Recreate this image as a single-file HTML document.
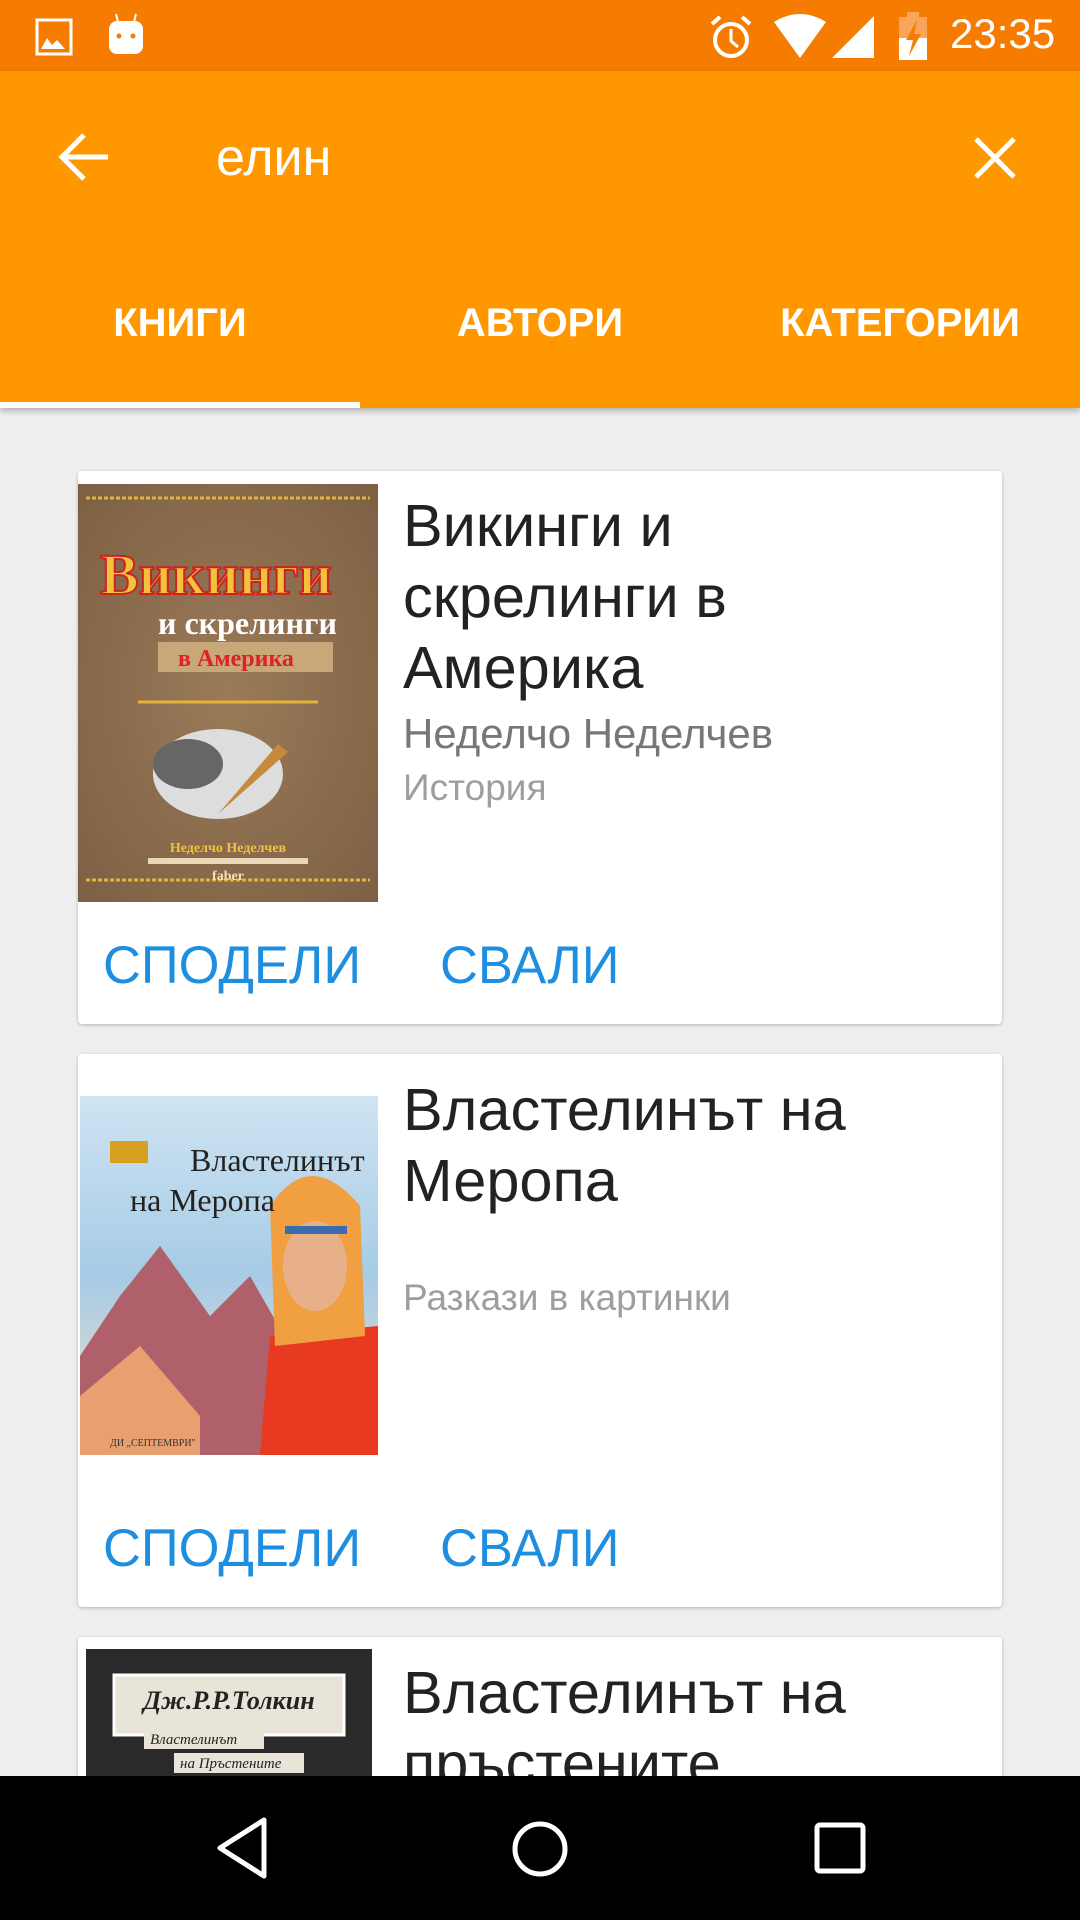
<!DOCTYPE html>
<html><head><meta charset="utf-8">
<style>
*{margin:0;padding:0;box-sizing:border-box}
body{width:1080px;height:1920px;overflow:hidden;background:#eeeeee;font-family:"Liberation Sans","Noto Sans CJK SC",sans-serif;position:relative}
.abs{position:absolute}
#status{left:0;top:0;width:1080px;height:71px;background:#f57c00}
#bar{left:0;top:71px;width:1080px;height:337px;background:#ff9800;box-shadow:0 3px 6px rgba(0,0,0,.25)}
.tab{top:300px;color:#fff;font-weight:bold;font-size:40px;width:360px;text-align:center}
.card{left:78px;width:924px;background:#fff;border-radius:4px;box-shadow:0 1px 3px rgba(0,0,0,.25)}
.title{left:403px;font-size:59.5px;line-height:71px;color:#222}
.auth{left:403px;font-size:42px;color:#777}
.cat{left:403px;font-size:37px;color:#9e9e9e}
.btn{font-size:52.5px;color:#1e8ee0}
#nav{left:0;top:1776px;width:1080px;height:144px;background:#000}
</style></head><body>
<div id="status" class="abs">
 <svg class="abs" style="left:35px;top:18px" width="38" height="38" viewBox="0 0 38 38"><rect x="2" y="2" width="34" height="34" fill="none" stroke="#fff" stroke-width="3"/><path d="M6 31 L12 20 L17 27 L22 22 L30 31 Z" fill="#fff"/></svg>
 <svg class="abs" style="left:106px;top:12px" width="40" height="44" viewBox="0 0 40 44"><path d="M10 2 L12 10 M30 2 L28 10" stroke="#fff" stroke-width="2"/><rect x="3" y="9" width="34" height="33" rx="8" fill="#fff"/><circle cx="13" cy="24" r="2.5" fill="#f57c00"/><circle cx="27" cy="24" r="2.5" fill="#f57c00"/></svg>
 <svg class="abs" style="left:709px;top:14px" width="44" height="46" viewBox="0 0 44 46"><circle cx="22" cy="26" r="16" fill="none" stroke="#fff" stroke-width="4"/><path d="M22 15 V27 L29 33" fill="none" stroke="#fff" stroke-width="3"/><path d="M3 10 L11 3 M41 10 L33 3" stroke="#fff" stroke-width="4"/></svg>
 <svg class="abs" style="left:772px;top:14px" width="56" height="44" viewBox="0 0 56 44"><path d="M2 8 Q28 -8 54 8 L28 44 Z" fill="#fff"/></svg>
 <svg class="abs" style="left:832px;top:14px" width="44" height="44" viewBox="0 0 44 44"><path d="M42 2 V44 H0 Z" fill="#fff"/></svg>
 <svg class="abs" style="left:898px;top:12px" width="30" height="48" viewBox="0 0 30 48"><rect x="9" y="0" width="12" height="5" fill="#f9a55a"/><rect x="1" y="5" width="28" height="43" fill="#f9a55a"/><rect x="1" y="26" width="28" height="22" fill="#fff"/><path d="M19 8 L8 28 H15 L11 44 L23 22 H16 Z" fill="#f57c00"/></svg>
 <div class="abs" style="left:950px;top:10px;color:#fff;font-size:42px">23:35</div>
</div>
<div id="bar" class="abs">
 <svg class="abs" style="left:58px;top:60px" width="52" height="52" viewBox="0 0 52 52"><path d="M50 26 H6 M26 4 L4 26 L26 48" fill="none" stroke="#fff" stroke-width="5"/></svg>
 <div class="abs" style="left:216px;top:57px;color:#fff;font-size:52px">елин</div>
 <svg class="abs" style="left:972px;top:64px" width="46" height="46" viewBox="0 0 46 46"><path d="M4 4 L42 42 M42 4 L4 42" stroke="#fff" stroke-width="5"/></svg>
 <div class="abs tab" style="left:0;top:230px">КНИГИ</div>
 <div class="abs tab" style="left:360px;top:230px">АВТОРИ</div>
 <div class="abs tab" style="left:720px;top:230px">КАТЕГОРИИ</div>
 <div class="abs" style="left:0;top:331px;width:360px;height:6px;background:#fff"></div>
</div>

<div class="abs card" style="top:471px;height:553px"></div>
<svg class="abs" style="left:78px;top:484px" width="300" height="418" viewBox="0 0 300 418">
 <defs><radialGradient id="g1" cx="50%" cy="50%" r="70%"><stop offset="0" stop-color="#9a7a58"/><stop offset="1" stop-color="#7d6044"/></radialGradient></defs>
 <rect width="300" height="418" fill="url(#g1)"/>
 <line x1="8" y1="14" x2="292" y2="14" stroke="#e3b33a" stroke-width="3" stroke-dasharray="4 2"/>
 <line x1="8" y1="396" x2="292" y2="396" stroke="#e3b33a" stroke-width="3" stroke-dasharray="4 2"/>
 <text x="22" y="110" font-family="Liberation Serif" font-weight="bold" font-size="58" fill="#f2c23c" stroke="#c22" stroke-width="2">Викинги</text>
 <text x="80" y="150" font-family="Liberation Serif" font-weight="bold" font-size="32" fill="#fff">и скрелинги</text>
 <rect x="80" y="158" width="175" height="30" fill="#c8a778"/>
 <text x="100" y="182" font-family="Liberation Serif" font-weight="bold" font-size="24" fill="#d22">в Америка</text>
 <line x1="60" y1="218" x2="240" y2="218" stroke="#e3b33a" stroke-width="3"/>
 <ellipse cx="140" cy="290" rx="65" ry="45" fill="#ddd"/>
 <ellipse cx="110" cy="280" rx="35" ry="25" fill="#666"/>
 <path d="M140 330 L200 260 L210 268 Z" fill="#c68b3a"/>
 <text x="150" y="368" text-anchor="middle" font-family="Liberation Serif" font-weight="bold" font-size="14" fill="#f2c23c">Неделчо Неделчев</text>
 <rect x="70" y="374" width="160" height="6" fill="#e8d8b8"/>
 <text x="150" y="396" text-anchor="middle" font-family="Liberation Serif" font-weight="bold" font-size="14" fill="#f2e2b0">faber</text>
</svg>
<div class="abs title" style="top:490px">Викинги и<br>скрелинги в<br>Америка</div>
<div class="abs auth" style="top:710px">Неделчо Неделчев</div>
<div class="abs cat" style="top:767px">История</div>
<div class="abs btn" style="left:103px;top:935px">СПОДЕЛИ</div>
<div class="abs btn" style="left:440px;top:935px">СВАЛИ</div>

<div class="abs card" style="top:1054px;height:553px"></div>
<svg class="abs" style="left:80px;top:1096px" width="298" height="359" viewBox="0 0 298 359">
 <defs><linearGradient id="g2" x1="0" y1="0" x2="0" y2="1"><stop offset="0" stop-color="#cfe4f2"/><stop offset=".5" stop-color="#a6cbe6"/><stop offset="1" stop-color="#f4e0c8"/></linearGradient></defs>
 <rect width="298" height="359" fill="url(#g2)"/>
 <path d="M0 260 L40 200 L80 150 L130 220 L170 180 L210 250 L210 359 L0 359 Z" fill="#b0606a"/>
 <path d="M0 300 L60 250 L120 320 L120 359 L0 359Z" fill="#e8a070"/>
 <path d="M180 359 L190 240 L298 230 L298 359 Z" fill="#e83a20"/>
 <path d="M190 110 Q230 50 280 110 L285 240 L195 250 Z" fill="#f0a040"/>
 <ellipse cx="235" cy="170" rx="32" ry="45" fill="#e8b088"/>
 <rect x="205" y="130" width="62" height="8" fill="#3a6ab0"/>
 <rect x="30" y="45" width="38" height="22" fill="#d7a020"/>
 <text x="110" y="75" font-family="Liberation Serif" font-size="32" fill="#222">Властелинът</text>
 <text x="50" y="115" font-family="Liberation Serif" font-size="32" fill="#222">на Меропа</text>
 <text x="30" y="350" font-family="Liberation Serif" font-size="10" fill="#333">ДИ „СЕПТЕМВРИ"</text>
</svg>
<div class="abs title" style="top:1074px">Властелинът на<br>Меропа</div>
<div class="abs cat" style="top:1277px">Разкази в картинки</div>
<div class="abs btn" style="left:103px;top:1518px">СПОДЕЛИ</div>
<div class="abs btn" style="left:440px;top:1518px">СВАЛИ</div>

<div class="abs card" style="top:1637px;height:200px"></div>
<svg class="abs" style="left:86px;top:1649px" width="286" height="130" viewBox="0 0 286 130">
 <rect width="286" height="130" fill="#2a2a2a"/>
 <rect x="28" y="26" width="230" height="60" fill="#e8e4d8" stroke="#fff" stroke-width="3"/>
 <text x="143" y="60" text-anchor="middle" font-family="Liberation Serif" font-style="italic" font-weight="bold" font-size="26" fill="#222">Дж.Р.Р.Толкин</text>
 <rect x="58" y="80" width="120" height="20" fill="#e8e4d8"/>
 <text x="64" y="95" font-family="Liberation Serif" font-style="italic" font-size="15" fill="#222">Властелинът</text>
 <rect x="88" y="104" width="130" height="20" fill="#e8e4d8"/>
 <text x="94" y="119" font-family="Liberation Serif" font-style="italic" font-size="15" fill="#222">на Пръстените</text>
</svg>
<div class="abs title" style="top:1657px">Властелинът на<br>пръстените</div>

<div id="nav" class="abs">
 <svg class="abs" style="left:214px;top:40px" width="56" height="64" viewBox="0 0 56 64"><path d="M50 4 L6 32 L50 60 Z" fill="none" stroke="#fff" stroke-width="5" stroke-linejoin="round"/></svg>
 <svg class="abs" style="left:511px;top:44px" width="58" height="58" viewBox="0 0 58 58"><circle cx="29" cy="29" r="25" fill="none" stroke="#fff" stroke-width="5"/></svg>
 <svg class="abs" style="left:814px;top:46px" width="52" height="52" viewBox="0 0 52 52"><rect x="3" y="3" width="46" height="46" rx="3" fill="none" stroke="#fff" stroke-width="5"/></svg>
</div>
</body></html>
